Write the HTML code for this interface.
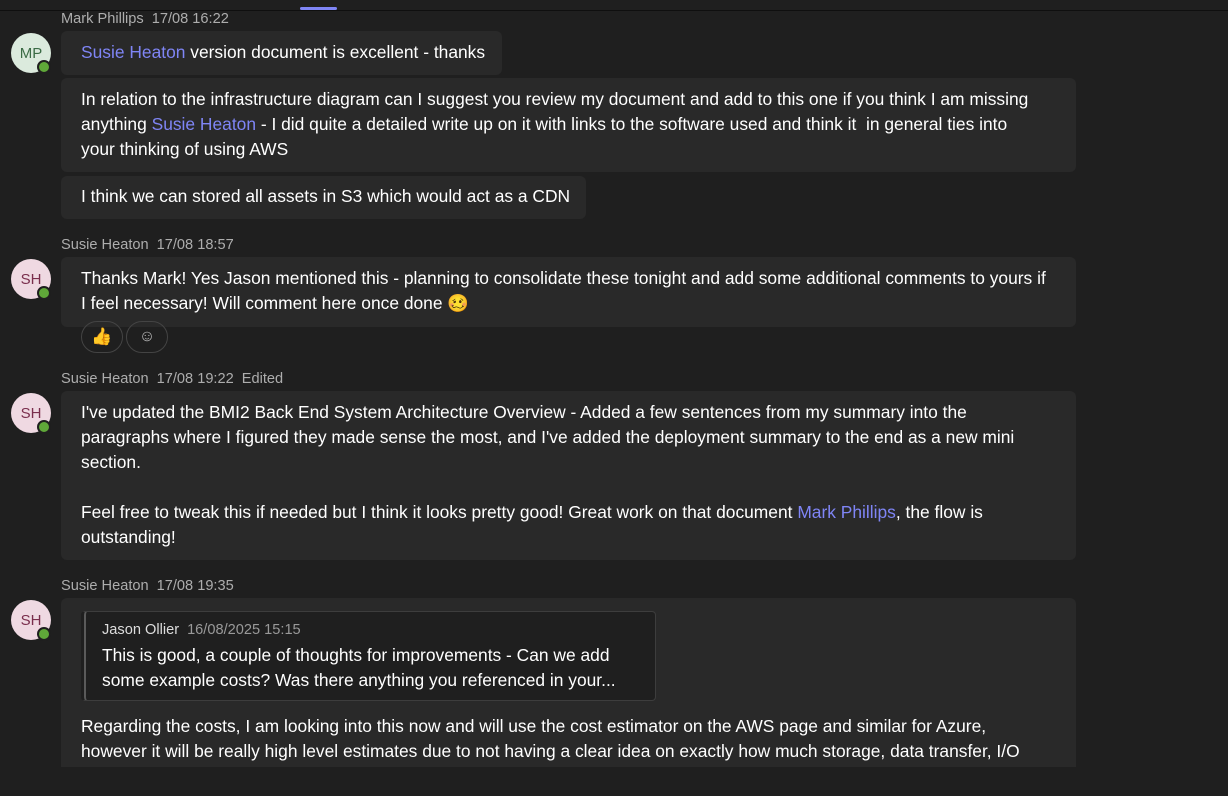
<!DOCTYPE html>
<html><head><style>
body{margin:0;width:1228px;height:796px;background:#1f1f1f;overflow:hidden;font-family:"Liberation Sans",sans-serif;color:#fff;position:relative}
.top{position:absolute;left:0;top:0;width:1228px;height:10px;background:#1f1f1f;border-bottom:1px solid #0f0f0f}
.ind{position:absolute;left:300px;top:7px;width:37px;height:3px;background:#7f85f5;border-radius:2px}
.clip{position:absolute;left:0;top:11px;width:1228px;height:756px;overflow:hidden}
.h{position:absolute;left:61px;font-size:14.6px;color:#adadad}
.h span{margin-left:8px}
.b{position:absolute;left:61px;background:#292929;border-radius:6px;padding:9px 20px;font-size:17.4px;line-height:25px;box-sizing:border-box;white-space:nowrap;overflow:hidden}
.m{color:#7f85f5}
.av{position:absolute;left:11px;width:40px;height:40px;border-radius:50%;font-size:15px;display:flex;align-items:center;justify-content:center}
.mp{background:#dbeadd;color:#3b6b45}
.sh{background:#efd9e2;color:#7a2f4d}
.st{position:absolute;left:37px;width:10px;height:10px;border-radius:50%;background:#5fa839;border:2px solid #1f1f1f}
.re{position:absolute;top:310px;height:32px;border:1px solid #444;border-radius:16px;box-sizing:border-box;display:flex;align-items:center;justify-content:center;font-size:17px}
.q{position:absolute;left:20px;top:13px;width:575px;height:90px;background:#1f1f1f;border:1px solid #3d3d3d;border-radius:4px;box-sizing:border-box;padding:8px 18px;border-left:3px solid #1f1f1f;box-shadow:inset 2px 0 0 #5a5a5a}
</style></head><body>
<div class="top"></div><div class="ind"></div>
<div class="clip">
<div class="h" style="top:0px">Mark Phillips<span>17/08 16:22</span></div>
<div class="av mp" style="top:22px">MP</div><div class="st" style="top:49px"></div>
<div class="b" style="top:20px;width:441px;height:44px;padding-top:9px"><span class="m">Susie Heaton</span> version document is excellent - thanks</div>
<div class="b" style="top:67px;width:1015px;height:94px;padding-top:9px">In relation to the infrastructure diagram can I suggest you review my document and add to this one if you think I am missing<br>anything <span class="m">Susie Heaton</span> - I did quite a detailed write up on it with links to the software used and think it&nbsp; in general ties into<br>your thinking of using AWS</div>
<div class="b" style="top:165px;width:525px;height:43px;padding-top:8px">I think we can stored all assets in S3 which would act as a CDN</div>

<div class="h" style="top:226px">Susie Heaton<span>17/08 18:57</span></div>
<div class="av sh" style="top:248px">SH</div><div class="st" style="top:275px"></div>
<div class="b" style="top:246px;width:1015px;height:70px">Thanks Mark! Yes Jason mentioned this - planning to consolidate these tonight and add some additional comments to yours if<br>I feel necessary! Will comment here once done 🥴</div>
<div class="re" style="left:81px;width:42px">👍</div>
<div class="re" style="left:126px;width:42px;color:#bbb;font-size:16px">☺</div>

<div class="h" style="top:360px">Susie Heaton<span>17/08 19:22</span><span>Edited</span></div>
<div class="av sh" style="top:382px">SH</div><div class="st" style="top:409px"></div>
<div class="b" style="top:380px;width:1015px;height:169px">I've updated the BMI2 Back End System Architecture Overview - Added a few sentences from my summary into the<br>paragraphs where I figured they made sense the most, and I've added the deployment summary to the end as a new mini<br>section.<br><br>Feel free to tweak this if needed but I think it looks pretty good! Great work on that document <span class="m">Mark Phillips</span>, the flow is<br>outstanding!</div>

<div class="h" style="top:567px">Susie Heaton<span>17/08 19:35</span></div>
<div class="av sh" style="top:589px">SH</div><div class="st" style="top:616px"></div>
<div class="b" style="top:587px;width:1015px;height:200px;padding-top:116px">
<div class="q"><div style="font-size:14.6px;line-height:20px"><span style="color:#ddd">Jason Ollier</span><span style="color:#999;margin-left:8px">16/08/2025 15:15</span></div><div style="line-height:25px;margin-top:3px">This is good, a couple of thoughts for improvements - Can we add<br>some example costs? Was there anything you referenced in your...</div></div>
Regarding the costs, I am looking into this now and will use the cost estimator on the AWS page and similar for Azure,<br>however it will be really high level estimates due to not having a clear idea on exactly how much storage, data transfer, I/O<br>operations etc I'll try to estimate the overall costs and some ballpark costs in the end during the more estimated figures 😬</div>
</div>
</body></html>
